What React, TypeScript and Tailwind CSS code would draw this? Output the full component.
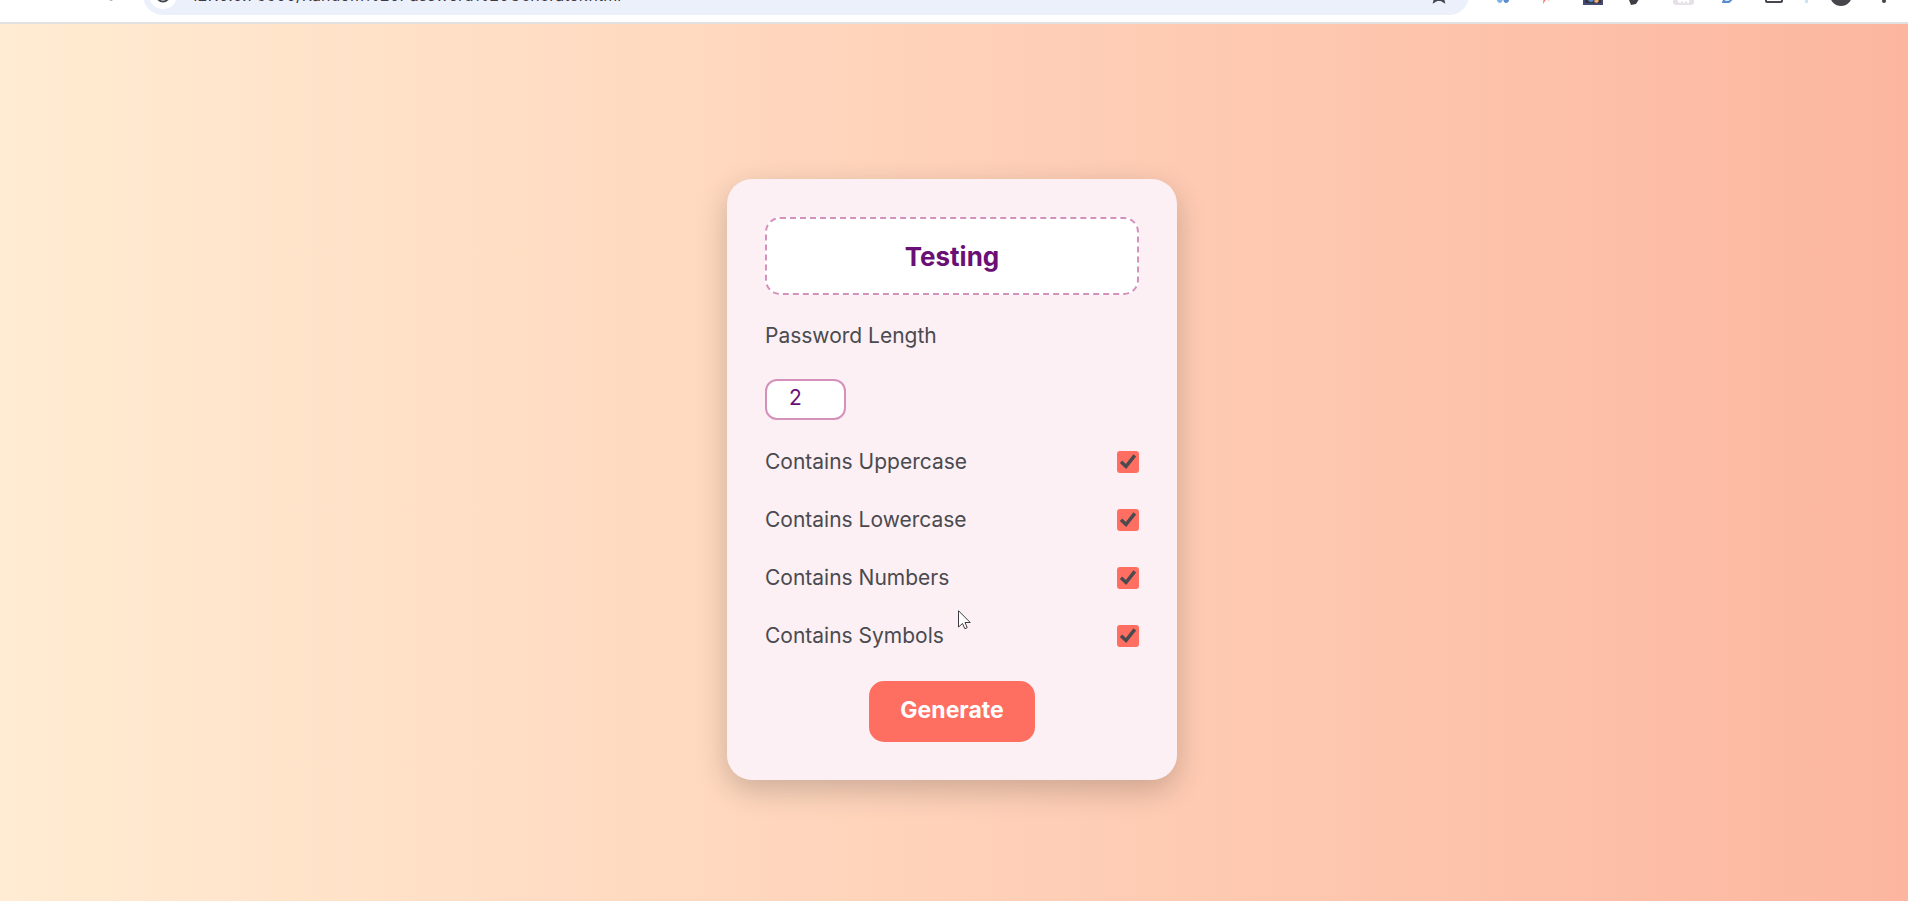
import { useState } from "react";

const OPTIONS = [
  { id: "uppercase", label: "Contains Uppercase" },
  { id: "lowercase", label: "Contains Lowercase" },
  { id: "numbers", label: "Contains Numbers" },
  { id: "symbols", label: "Contains Symbols" },
];

function Toolbar() {
  return (
    <header className="flex h-6 items-end overflow-hidden border-b-2 border-[#dfe2e0] bg-white">
      <div className="flex h-[54px] w-full shrink-0 items-center pr-[22px]">
        <nav className="flex w-[143px] shrink-0 items-center gap-8 pl-3">
          <svg className="size-3.5" viewBox="0 0 18 18" fill="none" stroke="#8a8a90" strokeWidth="1.6">
            <path d="M16 9H3M9 3L3 9l6 6" />
          </svg>
          <svg className="size-3.5" viewBox="0 0 18 18" fill="none" stroke="#c5a9a5" strokeWidth="1.6">
            <path d="M2 9h13M9 3l6 6-6 6" />
          </svg>
          <svg className="size-3.5" viewBox="0 0 18 18" fill="none" stroke="#46464f" strokeWidth="2">
            <path d="M14.500 5.500A6.300 6.300 0 1 0 15.300 9M15 2v4h-4" />
          </svg>
        </nav>
        <div className="flex h-10 flex-1 items-center rounded-full bg-[#ecf0fa] pl-1.5 pr-5">
          <span className="flex size-7 items-center justify-center rounded-full bg-white">
            <svg className="size-4" viewBox="0 0 16 16" fill="none" stroke="#46464f" strokeWidth="2">
              <circle cx="8" cy="8" r="6.500" />
              <path d="M8 7v5M8 4v2" />
            </svg>
          </span>
          <span className="flex-1 pl-3.5 text-[16px] leading-6 text-[#3c3a42]">
            127.0.0.1:5500/Random%20Password%20Generator.html
          </span>
          <svg className="size-5" viewBox="0 0 20 20" fill="none" stroke="#46464f" strokeWidth="1.800">
            <path d="M10 2l2.300 5.200 5.700.5-4.300 3.700 1.300 5.600-5-3-5 3 1.300-5.600L2 7.700l5.700-.5z" />
          </svg>
        </div>
        <div className="flex w-[417px] shrink-0 items-center pl-[26px]">
          <svg className="mr-[30px] h-4 w-4" viewBox="0 0 16 16">
            <path d="M8 8C5 0 0 0 0 4c0 3 2 4 3 4-2 1-2 8 2 8 2 0 3-2 3-8z" fill="#80b4e8" />
            <path d="M8 8c3-8 8-8 8-4 0 3-2 4-3 4 2 1 2 8-2 8-2 0-3-2-3-8z" fill="#5c8ccc" />
          </svg>
          <svg className="mr-[30px] h-[18px] w-3" viewBox="0 0 12 18" fill="#ff6f61">
            <path d="M7 0L1 9h2L2 18l4-6 2 3 1-4 3-2H7z" />
          </svg>
          <svg className="mr-[26px] size-5" viewBox="0 0 20 20">
            <path d="M0 0h20v20H0z" fill="#454a75" />
            <path d="M2 2h16v16H2z" fill="#34353f" />
            <circle cx="8" cy="14" r="3" fill="#5b8bd4" />
            <path d="M11 17l2-5 3 4-2 2z" fill="#f1ae69" />
          </svg>
          <svg className="mr-8 h-5 w-3" viewBox="0 0 12 20">
            <path d="M1 8L12 3v8l-5 8-5 1-2-5z" fill="#3d3d46" />
            <path d="M4 15l4-5" stroke="#6969a0" strokeWidth="2" />
          </svg>
          <svg className="mr-7 h-5 w-[21px]" viewBox="0 0 21 20">
            <rect width="21" height="20" rx="3" fill="#e5e1e7" />
            <path d="M5 15l2 2 2-3 2 3 2-3 2 3 1-2" fill="none" stroke="#fff" strokeWidth="2" />
          </svg>
          <svg className="mr-[30px] h-4 w-[13px]" viewBox="0 0 13 16" fill="#cde8fa" stroke="#5b8bd0" strokeWidth="2">
            <path d="M2 2h7l2 4v5l-4 4H1l2-3z" />
          </svg>
          <svg className="mr-[22px] h-4 w-[18px]" viewBox="0 0 18 16" fill="none" stroke="#46464f" strokeWidth="2">
            <rect x="1" y="1" width="16" height="14" rx="1" />
          </svg>
          <span className="mr-[22px] h-4 w-[3px] bg-[#c5e5fa]" />
          <span className="size-[22px] rounded-full bg-[#46464b]" />
          <svg className="ml-auto h-[15px] w-1" viewBox="0 0 4 15" fill="#46464b">
            <circle cx="2" cy="2" r="2" />
            <circle cx="2" cy="7.500" r="2" />
            <circle cx="2" cy="13" r="2" />
          </svg>
        </div>
      </div>
    </header>
  );
}

function Option({ id, label }: { id: string; label: string }) {
  const [checked, setChecked] = useState(true);
  return (
    <div className="flex h-8 items-center justify-between">
      <label htmlFor={id}>{label}</label>
      <span className="grid place-items-center">
        <input
          id={id}
          type="checkbox"
          checked={checked}
          onChange={(e) => setChecked(e.target.checked)}
          className="peer col-start-1 row-start-1 size-[22px] appearance-none rounded-[3px] border-2 border-[#ff6f61] bg-white checked:bg-[#ff6f61]"
        />
        <svg
          className="pointer-events-none invisible col-start-1 row-start-1 size-[22px] peer-checked:visible"
          viewBox="0 0 22 22"
          fill="none"
          stroke="#4a4a4f"
          strokeWidth="3.500"
        >
          <path d="M4 10.800L9 15.500L17.800 4.300" />
        </svg>
      </span>
    </div>
  );
}

export default function App() {
  const [length, setLength] = useState("2");
  return (
    <div className="flex min-h-screen flex-col bg-white font-[Inter,'Open_Sans',sans-serif]">
      <Toolbar />
      <main className="flex flex-1 items-start justify-center bg-linear-to-r from-[#ffecd2] to-[#fcb69f] pt-[155px] pr-1 pb-10">
        <section className="relative flex w-[450px] flex-col gap-[26px] rounded-[25px] bg-[#fcf0f4] p-[38px] text-[21px] text-[#4a4a4f] shadow-[0_10px_30px_rgba(0,0,0,0.2)]">
          <output className="flex h-[78px] items-center justify-center rounded-[15px] border-2 border-dashed border-[#d491bb] bg-white text-[26px] font-bold text-[#6a0f75]">
            Testing
          </output>
          <label htmlFor="length" className="h-8 leading-[30px]">
            Password Length
          </label>
          <input
            id="length"
            type="number"
            value={length}
            onChange={(e) => setLength(e.target.value)}
            className="h-[41px] w-[81px] rounded-[12px] border-2 border-[#d491bb] bg-white pb-1 pl-[22px] text-[#6a0f75]"
          />
          {OPTIONS.map((o) => (
            <Option key={o.id} id={o.id} label={o.label} />
          ))}
          <button
            type="button"
            className="mt-[3px] h-[61px] w-[166px] self-center rounded-[15px] bg-[#ff6f61] pb-0.5 text-[23px] font-bold text-white"
          >
            Generate
          </button>
          <svg
            className="pointer-events-none absolute top-[431px] left-[231px] h-5 w-[14px]"
            viewBox="0 0 14 20"
            fill="#fff"
            stroke="#3c3c42"
          >
            <path d="M.5.700V17l4-3.500 2.300 5.200 2.400-1-2.200-5.200h5.200z" />
          </svg>
        </section>
      </main>
    </div>
  );
}
